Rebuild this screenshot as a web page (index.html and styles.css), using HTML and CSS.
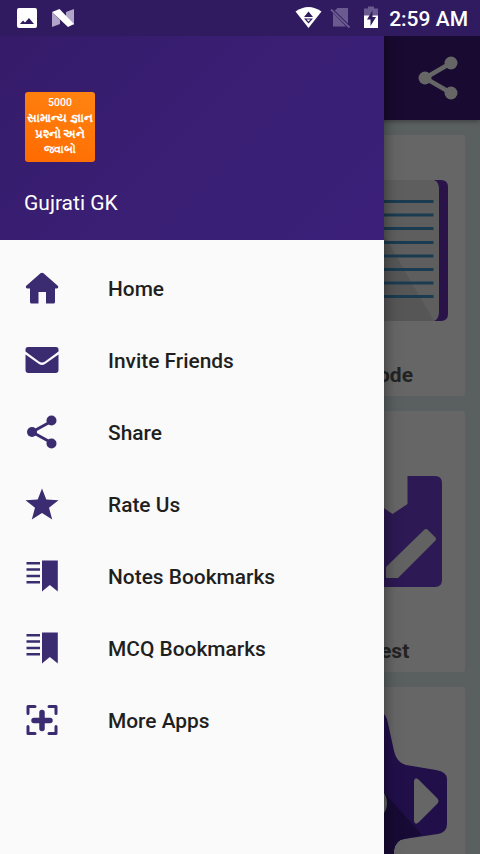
FILE: index.html
```html
<!DOCTYPE html>
<html lang="en">
<head>
<meta charset="utf-8">
<title>Gujrati GK</title>
<link rel="stylesheet" href="styles.css">
</head>
<body>
<div class="screen">
  <header class="status">
    <svg class="status-left" width="80" height="36" viewBox="0 0 80 36">
      <path fill="#fff" fill-rule="evenodd" d="M19 8h16q2 0 2 2v16q0 2-2 2H19q-2 0-2-2V10q0-2 2-2zM20 24h14l-5-6-4 4.500-2-2z"/>
      <path fill="#b0a5c8" d="M52 12l8 8v4l-8 3zM74 9v16l-8-6v-7z"/>
      <path fill="#fff" d="M52 12l7.500-3L74 24l-6 3z"/>
    </svg>
    <div class="status-right">
      <svg width="90" height="36" viewBox="292 0 90 36">
        <path fill="#fff" d="M295.500 11.500Q308.500 2.500 321.500 11.500L308.500 28z"/>
        <path fill="#311b60" d="M308.500 11.500l4.500 5.500h-9zM304 18.500h9l-4.500 5z"/>
        <path fill="#fff" d="M306.500 19.500h4l-2 2z"/>
        <path fill="#6b5a8f" d="M337.500 8H348v15.500L334.700 10.500zM333 13L346 26.500H333z"/>
        <path stroke="#6b5a8f" stroke-width="1.800" d="M331 9.500l18.500 18"/>
        <path fill="#6b5a8f" d="M364 8.500h4V6.500h6v2h4V16h-14z"/>
        <path fill="#fff" d="M364 15.500h14V28h-14z"/>
        <path fill="#311b60" d="M372.500 10.500V17h3.500l-5.500 9v-6.500H367z"/>
      </svg>
      <span class="clock">2:59 AM</span>
    </div>
  </header>
  <div class="appbar">
    <svg width="42" height="46" viewBox="417 55 42 46">
      <path fill="none" stroke="#fff" stroke-width="4.500" d="M451 63l-26 15 26 15"/>
      <g fill="#fff"><circle cx="451" cy="63" r="6.500"/><circle cx="425" cy="78" r="6.500"/><circle cx="451" cy="93" r="6.500"/></g>
    </svg>
  </div>
  <main class="cards">
    <section class="card">
      <svg class="art" width="218" height="222" viewBox="247 135 218 222">
        <path fill="#6930b4" d="M434 180h7q7 0 7 7v127q0 7-7 7h-7z"/>
        <path fill="#ececec" d="M300 180h134q5 2 5 9v123q0 7-5 9H300z"/>
        <path fill="#d8d8d8" d="M300 180h84v55l50 86H300z"/>
        <path stroke="#4495c8" stroke-width="3" d="M300 201.500h133.500M300 215h133.500M300 228.500h133.500M300 242.500h133.500M300 256h133.500M300 269.500h133.500M300 283h133.500M300 296.500h133.500"/>
      </svg>
      <h2 class="label label-mode">ode</h2>
    </section>
    <section class="card">
      <svg class="art" width="218" height="222" viewBox="247 411 218 222">
        <path fill="#7040cf" d="M300 476h68v21l24.500 17 15-10v-28H435q7 0 7 7v97q0 7-7 7H300z"/>
        <path fill="#f4f4f4" d="M386 578v-11l38-37q2-2 4 0l7 7q2 2 0 4l-37 37z"/>
      </svg>
      <h2 class="label">est</h2>
    </section>
    <section class="card">
      <svg class="art" width="218" height="222" viewBox="247 687 218 222">
        <path fill="#5327b8" d="M340 687l44 27q2 2 3 5l7 32q3 12 12 14l30 5q11 2 11 9v45q0 8-9 10l-34 5q-8 1-10 11v20h-94z"/>
        <path fill="#3b1a83" d="M375 782l47 53-18 4q-8 1-10 11v20h-54z"/>
        <path fill="#fff" d="M414 781q1-5 5-1l18 18q3 3 0 6l-18 18q-4 4-5-1z"/>
        <circle cx="368" cy="803" r="19" fill="#fff"/>
      </svg>
    </section>
  </main>
  <div class="scrim"></div>
  <nav class="drawer">
    <div class="drawer-head">
      <div class="logo"><span class="l1">5000</span><span class="l2">સામાન્ય જ્ઞાન</span><span class="l3">પ્રશ્નો અને</span><span class="l4">જવાબો</span></div>
      <div class="app-name">Gujrati GK</div>
    </div>
    <ul class="menu">
      <li><svg width="36" height="36" viewBox="24 270 36 36"><path d="M40.500 273.300q1.500-1.300 3 0L58 286q.8 2.500-1.500 2.500H55V302q0 1.500-1.500 1.500H46V292h-7.500v11.500H31.500q-1.500 0-1.500-1.500v-13.500h-2.500q-2 0-1.500-2.500z"/></svg><span>Home</span></li>
      <li><svg width="36" height="36" viewBox="24 342 36 36"><path d="M28 347h28q2.500 0 2.500 2.500v2L45 361.500q-3 2-6 0L25.500 351.500v-2q0-2.500 2.500-2.500zM25.500 354.500L39 364q3 2 6 0l13.500-9.500V370q0 3-3 3h-27q-3 0-3-3z"/></svg><span>Invite Friends</span></li>
      <li><svg width="36" height="36" viewBox="24 414 36 36"><path class="line" d="M52 421l-20 11 20 11"/><circle cx="51.500" cy="420.500" r="5"/><circle cx="32" cy="432" r="5"/><circle cx="51.500" cy="443.500" r="5"/></svg><span>Share</span></li>
      <li><svg width="36" height="36" viewBox="24 486 36 36"><path d="M42 488.500l4.300 11 12.200.7-9.500 7.500 3.200 11.800L42 513l-10.200 6.500 3.200-11.800-9.500-7.500 12.200-.7z"/></svg><span>Rate Us</span></li>
      <li><svg width="36" height="36" viewBox="24 558 36 36"><path d="M26.500 562H40v2.500H26.500zM26.500 568.300H40v2.500H26.500zM26.500 574.700H40v2.500H26.500zM26.500 581H40v2.500H26.500zM42 560.500h15.800v31l-8-6.500-7.800 6.500z"/></svg><span>Notes Bookmarks</span></li>
      <li><svg width="36" height="36" viewBox="24 630 36 36"><path d="M26.500 634H40v2.500H26.500zM26.500 640.300H40v2.500H26.500zM26.500 646.700H40v2.500H26.500zM26.500 653H40v2.500H26.500zM42 632.500h15.800v31l-8-6.500-7.800 6.500z"/></svg><span>MCQ Bookmarks</span></li>
      <li><svg width="36" height="36" viewBox="24 702 36 36"><path class="line" d="M35 706.500h-7v7M49 706.500h7v7M28 726.500v7h7M56 726.500v7h-7"/><path class="plus" d="M42 712.500v16M34 720.500h16"/></svg><span>More Apps</span></li>
    </ul>
  </nav>
</div>
</body>
</html>
```

FILE: styles.css
```css
* { box-sizing: border-box; }
body { margin: 0; font-family: Roboto, "Noto Sans", sans-serif; }
svg { display: block; }
.screen { position: relative; width: 480px; height: 854px; overflow: hidden; background: #e1efef; }

.status { position: relative; z-index: 3; height: 36px; display: flex; justify-content: space-between; background: #311b60; }
.status-right { display: flex; align-items: center; padding-right: 12px; gap: 7px; }
.clock { padding-top: 2px; color: #fff; font-size: 21px; font-weight: 500; line-height: 34px; white-space: nowrap; }

.appbar { position: relative; height: 84px; display: flex; align-items: center; justify-content: flex-end; padding-right: 21px; background: #3c1a78; box-shadow: 0 1px 5px rgba(0, 0, 0, .4); }

.cards { display: grid; gap: 15px; padding: 15px 15px 0 247px; }
.card { height: 261px; background: #fff; border-radius: 3px; overflow: hidden; }
.label { margin: 4px 0 0 133px; font-size: 21px; line-height: 28px; font-weight: 700; color: #595959; }
.label-mode { margin-left: 131px; }

.scrim { position: absolute; inset: 36px 0 0; background: rgba(0, 0, 0, .6); }
.drawer { position: absolute; top: 36px; bottom: 0; left: 0; width: 384px; z-index: 2; background: #fafafa; box-shadow: 0 0 14px rgba(0, 0, 0, .5); }
.drawer-head { height: 204px; padding: 56px 24px 0 25px; background: linear-gradient(135deg, #351b69, #3a1f75 55%, #3b1f79); }
.logo { width: 70px; height: 70px; display: flex; flex-direction: column; align-items: center; padding-top: 3px; border-radius: 3px; background: linear-gradient(20deg, #ff6a00, #ff8512); color: #fff; font-weight: 700; white-space: nowrap; }
.logo span { line-height: 16px; font-size: 12px; }
.logo .l1 { font-family: Roboto, sans-serif; font-size: 10.5px; line-height: 15px; font-weight: 500; }
.logo .l2 { font-size: 11.800px; }
.logo .l3 { font-size: 11.500px; line-height: 17px; }
.logo .l4 { font-size: 10.500px; line-height: 14px; }
.app-name { margin: 27px 0 0 -1px; font-size: 21px; line-height: 28px; color: #fff; }

.menu { list-style: none; margin: 0; padding: 12px 0 0; }
.menu li { height: 72px; padding: 0 24px; display: flex; align-items: center; gap: 48px; font-size: 20.900px; font-weight: 500; color: #1f1f1f; }
.menu span { padding-top: 2px; }
.menu svg { fill: #3b2c72; }
.menu .line { fill: none; stroke: #3b2c72; stroke-width: 3; stroke-linecap: round; stroke-linejoin: round; }
.menu .plus { fill: none; stroke: #3b2c72; stroke-width: 5.500; stroke-linecap: round; }
```
